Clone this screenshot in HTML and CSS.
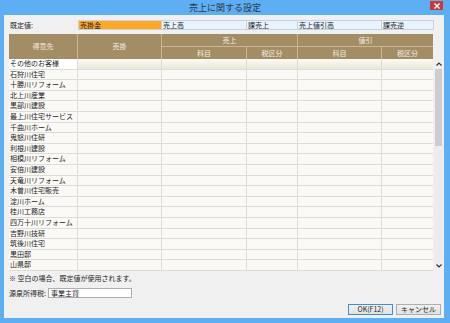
FILE: index.html
```html
<!DOCTYPE html>
<html lang="ja">
<head>
<meta charset="utf-8">
<link rel="stylesheet" href="styles.css">
</head>
<body>
<div class="window">
  <div class="titlebar">
    <span class="title">売上に関する設定</span>
    <span class="close"><svg width="6" height="6" viewBox="0 0 6 6"><path d="M0.5 0.5L5.5 5.5M5.5 0.5L0.5 5.5" stroke="#fff" stroke-width="1.4"/></svg></span>
  </div>
  <div class="content">
    <div class="defaults">
      <span class="deflabel">既定値:</span>
      <div class="defboxes">
        <span class="defbox sel w84">売掛金</span>
        <span class="defbox w85">売上高</span>
        <span class="defbox w51">課売上</span>
        <span class="defbox w84">売上値引高</span>
        <span class="defbox w51">課売逆</span>
      </div>
    </div>
    <div class="table">
      <div class="thead">
        <div class="th c1 r2">得意先</div>
        <div class="th c2 r2">売掛</div>
        <div class="th c34">売上</div>
        <div class="th c56">値引</div>
        <div class="th">科目</div>
        <div class="th">税区分</div>
        <div class="th">科目</div>
        <div class="th">税区分</div>
      </div>
      <div class="bodywrap">
        <div class="tbody" id="tbody"></div>
        <div class="scrollbar">
          <span class="arrow"><svg width="6" height="4" viewBox="0 0 6 4"><path d="M0.5 3.5L3 1L5.5 3.5" fill="none" stroke="#333" stroke-width="1.2"/></svg></span>
          <span class="thumb"></span>
          <span class="track"></span>
          <span class="arrow"><svg width="6" height="4" viewBox="0 0 6 4"><path d="M0.5 0.5L3 3L5.5 0.5" fill="none" stroke="#333" stroke-width="1.2"/></svg></span>
        </div>
      </div>
    </div>
    <div class="note">※ 空白の場合、既定値が使用されます。</div>
    <div class="gensen">
      <span class="glabel">源泉所得税:</span>
      <span class="ginput">事業主貸</span>
    </div>
    <div class="buttons">
      <span class="btn ok">OK(F12)</span>
      <span class="btn">キャンセル</span>
    </div>
  </div>
</div>
<script src="script.js"></script>
</body>
</html>
```

FILE: script.js
```js
var names = ["その他のお客様","石狩川住宅","十勝川リフォーム","北上川産業","黒部川建設","最上川住宅サービス","千曲川ホーム","鬼怒川住研","利根川建設","相模川リフォーム","安倍川建設","天竜川リフォーム","木曽川住宅販売","淀川ホーム","桂川工務店","四万十川リフォーム","吉野川技研","筑後川住宅","黒田邸","山県邸"];
var tb = document.getElementById("tbody");
names.forEach(function (n, i) {
  var row = document.createElement("div");
  row.className = "tr" + (i === 0 ? " first" : "");
  var c = document.createElement("div");
  c.className = "td name";
  c.textContent = n;
  row.appendChild(c);
  for (var k = 0; k < 5; k++) {
    var d = document.createElement("div");
    d.className = "td";
    row.appendChild(d);
  }
  tb.appendChild(row);
});
```

FILE: styles.css
```css
* { box-sizing: border-box; }
html, body { margin: 0; padding: 0; }
body {
  width: 450px;
  height: 323px;
  overflow: hidden;
  font-family: "Noto Sans CJK JP", "Noto Sans", sans-serif;
  font-size: 7px;
  color: #1e1e1e;
  white-space: nowrap;
}
.window {
  width: 450px;
  height: 323px;
  background: #5eaef3;
  display: flex;
  flex-direction: column;
}
.titlebar {
  height: 15px;
  position: relative;
  display: flex;
  align-items: center;
  justify-content: center;
}
.title {
  font-size: 9px;
  color: #2b3a4a;
  line-height: 15px;
}
.close {
  position: absolute;
  right: 7px;
  top: 1px;
  width: 13px;
  height: 9px;
  background: #c7393b;
  display: flex;
  align-items: center;
  justify-content: center;
}
.content {
  margin: 0 6px 5px 4px;
  flex: 1;
  background: #f0f0f0;
  padding: 5px 0 0 5px;
  display: flex;
  flex-direction: column;
}
.defaults {
  display: flex;
  align-items: center;
  height: 10px;
}
.deflabel {
  width: 69px;
  line-height: 10px;
  padding-left: 1px;
}
.defboxes {
  display: flex;
  height: 10px;
  border: 1px solid #c3d3e4;
  background: #e9f3fd;
}
.defbox {
  line-height: 8px;
  padding-left: 1px;
  border-right: 1px solid #c3d3e4;
}
.defbox:last-child { border-right: none; }
.defbox.sel { background: #ffa825; }
.w84 { width: 84px; }
.w85 { width: 85px; }
.w51 { width: 51px; }
.w84:first-child { width: 83px; }
.table {
  margin-top: 4px;
  display: flex;
  flex-direction: column;
}
.thead {
  width: 424px;
  display: grid;
  grid-template-columns: 69px 84px 85px 51px 84px 51px;
  grid-template-rows: 13px 12px;
  background: #a28d64;
}
.th {
  color: #f4efe4;
  display: flex;
  align-items: center;
  justify-content: center;
  border-right: 1px solid #c8b994;
  border-bottom: 1px solid #c8b994;
  line-height: 1;
}
.th:nth-child(4), .th:nth-child(8) { border-right: none; }
.th.r2 { grid-row: span 2; border-bottom: none; }
.th.c34 { grid-column: 3 / 5; }
.th.c56 { grid-column: 5 / 7; }
.thead .th:nth-child(n+5) { border-bottom: none; }
.bodywrap {
  display: flex;
  gap: 1px;
}
.tbody {
  width: 424px;
  display: flex;
  flex-direction: column;
}
.tr {
  height: 10.6px;
  display: grid;
  grid-template-columns: 69px 84px 85px 51px 84px 51px;
  background: #faf9f5;
  border-bottom: 1px solid #dedcd6;
}
.tr.first {
  background: linear-gradient(#fbfaf4, #ece7d9);
}
.td {
  border-right: 1px solid #dedcd6;
  line-height: 9.6px;
  overflow: hidden;
}
.td:last-child { border-right: none; }
.td.name { padding-left: 1px; color: #1e1e1e; }
.tr.first .td.name { background: #fff; }
.scrollbar {
  width: 9px;
  display: flex;
  flex-direction: column;
  background: #f0f0f0;
}
.arrow {
  height: 9px;
  display: flex;
  align-items: center;
  justify-content: center;
}
.thumb {
  height: 77px;
  background: #cdcdcd;
  margin: 1px 1px 0;
}
.track {
  flex: 1;
  background: #ececec;
}
.note {
  margin-top: 2px;
  line-height: 11px;
}
.gensen {
  margin-top: 4px;
  display: flex;
  align-items: center;
  height: 10px;
}
.glabel { width: 39px; }
.ginput {
  width: 84px;
  height: 10px;
  background: #fff;
  border: 1px solid #abadb3;
  line-height: 8px;
  padding-left: 2px;
}
.buttons {
  margin-top: 6px;
  display: flex;
  justify-content: flex-end;
  gap: 3px;
  padding-right: 3px;
}
.btn {
  width: 45px;
  height: 11px;
  border: 1px solid #adadad;
  background: linear-gradient(#f2f2f2, #e1e1e1);
  display: flex;
  align-items: center;
  justify-content: center;
  line-height: 1;
}
.btn.ok { border-color: #3c8fd6; }
```
